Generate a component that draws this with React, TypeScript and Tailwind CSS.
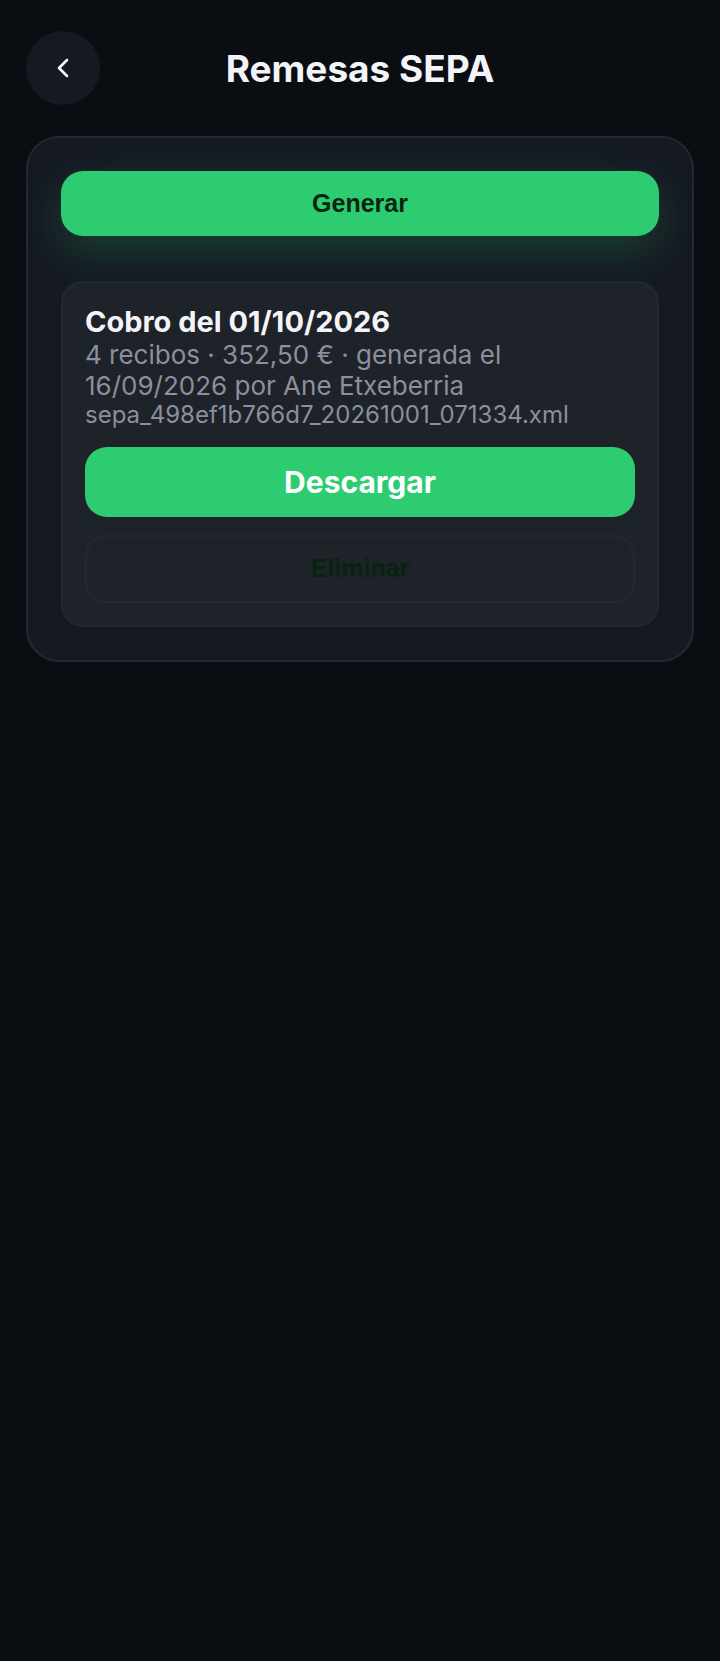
import { ChevronLeft } from 'lucide-react'

type Remesa = {
  id: string
  title: string
  summary: string
  file: string
}

const REMESAS: Remesa[] = [
  {
    id: '498ef1b766d7',
    title: 'Cobro del 01/10/2026',
    summary: '4 recibos · 352,50 € · generada el 16/09/2026 por Ane Etxeberria',
    file: 'sepa_498ef1b766d7_20261001_071334.xml',
  },
]

function Header() {
  return (
    <header className="grid grid-cols-[74px_1fr_74px] items-center">
      <button type="button" aria-label="Volver"
        className="flex h-[74px] w-[74px] items-center justify-center rounded-full bg-[#151921] text-[#f3f4f8]">
        <ChevronLeft className="h-8 w-8" strokeWidth={2} />
      </button>
      <h1 className="pt-0.5 text-center text-[37px] leading-[44px] font-bold text-[#f3f4f8]">Remesas SEPA</h1>
    </header>
  )
}

function RemesaCard({ remesa }: { remesa: Remesa }) {
  return (
    // relative keeps the card above the glow of the primary button
    <article className="relative rounded-[22px] border-2 border-[#242832] bg-[#1e2229] p-[22px]">
      <h2 className="text-[29px] leading-[34px] font-bold text-[#f3f4f8]">{remesa.title}</h2>
      <p className="max-w-[480px] text-[26px] leading-[31px] text-[#8b8f9e]">{remesa.summary}</p>
      <p className="text-[24px] leading-[28px] break-all text-[#8b8f9e]">{remesa.file}</p>
      <button type="button"
        className="mt-[18px] h-[70px] w-full rounded-[22px] bg-[#2ecc71] text-[30px] font-bold text-white">
        Descargar
      </button>
      <button type="button"
        className="mt-[18px] h-[68px] w-full rounded-[22px] border-2 border-[#242832] font-['Liberation_Sans',Arial,sans-serif] text-[25px] font-bold text-[#06240f]">
        Eliminar
      </button>
    </article>
  )
}

export default function App() {
  return (
    <div className="min-h-screen bg-[#0a0d12] px-[26px] pt-[31px] font-[Inter,sans-serif]">
      <Header />
      <main className="mt-[31px] rounded-[33px] border-2 border-[#242832] bg-[#151922] p-[33px]">
        <button type="button"
          className="h-[65px] w-full rounded-[22px] bg-[#2ecc71] font-['Liberation_Sans',Arial,sans-serif] text-[25px] font-bold text-[#06240f] shadow-[0_15px_44px_rgba(46,204,113,0.22)]">
          Generar
        </button>
        <section className="mt-[45px] flex flex-col gap-5">
          {REMESAS.map(r => <RemesaCard key={r.id} remesa={r} />)}
        </section>
      </main>
    </div>
  )
}
